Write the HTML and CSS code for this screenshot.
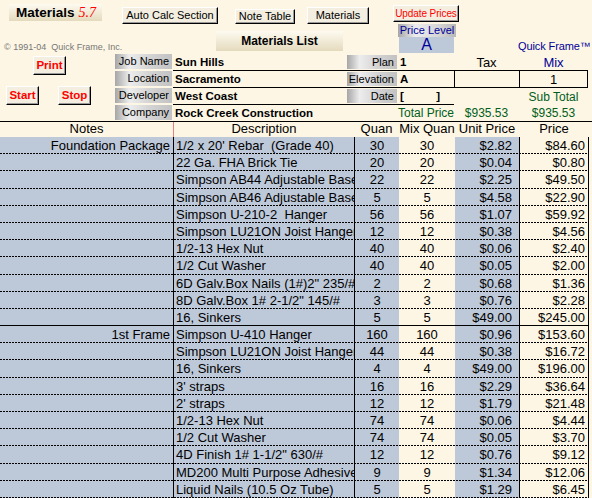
FILE: index.html
```html
<!DOCTYPE html>
<html lang="en">
<head>
    <meta charset="UTF-8">
    <title>Materials List</title>
    <link rel="stylesheet" href="styles.css">
</head>
<body>
<div class="screen">
    <div class="top">
        <div class="side">
            <div class="logo"><b>Materials</b><i>5.7</i></div>
            <div class="copy">© 1991-04  Quick Frame, Inc.</div>
            <div class="print-row"><button class="btn big">Print</button></div>
            <div class="run-row"><button class="btn big">Start</button><button class="btn big">Stop</button></div>
        </div>

        <div class="main">
            <div class="toolbar">
                <button class="btn auto">Auto Calc Section</button>
                <button class="btn note">Note Table</button>
                <button class="btn mats">Materials</button>
                <button class="btn update">Update Prices</button>
            </div>

            <div class="titlebar">
                <div class="list-title">Materials List</div>
                <div class="price-level">
                    <div class="pl-label">Price Level</div>
                    <div class="pl-value">A</div>
                </div>
                <div class="brand">Quick Frame™</div>
            </div>

            <div class="info">
                <div class="cell"><span class="lbl">Job Name</span></div>
                <div class="cell val line">Sun Hills</div>
                <div class="cell line"><span class="lbl small">Plan</span></div>
                <div class="cell val line">1</div>
                <div class="cell head line">Tax</div>
                <div class="cell head blue line">Mix</div>

                <div class="cell"><span class="lbl">Location</span></div>
                <div class="cell val line">Sacramento</div>
                <div class="cell line"><span class="lbl small">Elevation</span></div>
                <div class="cell val line">A</div>
                <div class="cell box line"></div>
                <div class="cell box mixbox line">1</div>

                <div class="cell"><span class="lbl">Developer</span></div>
                <div class="cell val line">West Coast</div>
                <div class="cell line"><span class="lbl small">Date</span></div>
                <div class="cell val line"><span class="date"><span>[</span><span>]</span></span></div>
                <div class="cell"></div>
                <div class="cell green mid">Sub Total</div>

                <div class="cell"><span class="lbl">Company</span></div>
                <div class="cell val">Rock Creek Construction</div>
                <div class="cell"></div>
                <div class="cell green mid">Total Price</div>
                <div class="cell green mid">$935.53</div>
                <div class="cell green mid">$935.53</div>
            </div>
        </div>
    </div>

    <div class="table">
        <div class="thead">
            <div class="c">Notes</div>
            <div class="c first">Description</div>
            <div class="c">Quan</div>
            <div class="c">Mix Quan</div>
            <div class="c">Unit Price</div>
            <div class="c">Price</div>
        </div>

        <!-- Foundation Package -->
        <div class="row"><div class="c notes">Foundation Package</div><div class="c desc">1/2 x 20' Rebar  (Grade 40)</div><div class="c qty">30</div><div class="c mix">30</div><div class="c unit">$2.82</div><div class="c price">$84.60</div></div>
        <div class="row"><div class="c notes"></div><div class="c desc">22 Ga. FHA Brick Tie</div><div class="c qty">20</div><div class="c mix">20</div><div class="c unit">$0.04</div><div class="c price">$0.80</div></div>
        <div class="row"><div class="c notes"></div><div class="c desc">Simpson AB44 Adjustable Base</div><div class="c qty">22</div><div class="c mix">22</div><div class="c unit">$2.25</div><div class="c price">$49.50</div></div>
        <div class="row"><div class="c notes"></div><div class="c desc">Simpson AB46 Adjustable Base</div><div class="c qty">5</div><div class="c mix">5</div><div class="c unit">$4.58</div><div class="c price">$22.90</div></div>
        <div class="row"><div class="c notes"></div><div class="c desc">Simpson U-210-2  Hanger</div><div class="c qty">56</div><div class="c mix">56</div><div class="c unit">$1.07</div><div class="c price">$59.92</div></div>
        <div class="row"><div class="c notes"></div><div class="c desc">Simpson LU21ON Joist Hanger</div><div class="c qty">12</div><div class="c mix">12</div><div class="c unit">$0.38</div><div class="c price">$4.56</div></div>
        <div class="row"><div class="c notes"></div><div class="c desc">1/2-13 Hex Nut</div><div class="c qty">40</div><div class="c mix">40</div><div class="c unit">$0.06</div><div class="c price">$2.40</div></div>
        <div class="row"><div class="c notes"></div><div class="c desc">1/2 Cut Washer</div><div class="c qty">40</div><div class="c mix">40</div><div class="c unit">$0.05</div><div class="c price">$2.00</div></div>
        <div class="row"><div class="c notes"></div><div class="c desc">6D Galv.Box Nails (1#)2" 235/#</div><div class="c qty">2</div><div class="c mix">2</div><div class="c unit">$0.68</div><div class="c price">$1.36</div></div>
        <div class="row"><div class="c notes"></div><div class="c desc">8D Galv.Box 1# 2-1/2" 145/#</div><div class="c qty">3</div><div class="c mix">3</div><div class="c unit">$0.76</div><div class="c price">$2.28</div></div>
        <div class="row end"><div class="c notes"></div><div class="c desc">16, Sinkers</div><div class="c qty">5</div><div class="c mix">5</div><div class="c unit">$49.00</div><div class="c price">$245.00</div></div>

        <!-- 1st Frame -->
        <div class="row"><div class="c notes">1st Frame</div><div class="c desc">Simpson U-410 Hanger</div><div class="c qty">160</div><div class="c mix">160</div><div class="c unit">$0.96</div><div class="c price">$153.60</div></div>
        <div class="row"><div class="c notes"></div><div class="c desc">Simpson LU21ON Joist Hanger</div><div class="c qty">44</div><div class="c mix">44</div><div class="c unit">$0.38</div><div class="c price">$16.72</div></div>
        <div class="row"><div class="c notes"></div><div class="c desc">16, Sinkers</div><div class="c qty">4</div><div class="c mix">4</div><div class="c unit">$49.00</div><div class="c price">$196.00</div></div>
        <div class="row"><div class="c notes"></div><div class="c desc">3' straps</div><div class="c qty">16</div><div class="c mix">16</div><div class="c unit">$2.29</div><div class="c price">$36.64</div></div>
        <div class="row"><div class="c notes"></div><div class="c desc">2' straps</div><div class="c qty">12</div><div class="c mix">12</div><div class="c unit">$1.79</div><div class="c price">$21.48</div></div>
        <div class="row"><div class="c notes"></div><div class="c desc">1/2-13 Hex Nut</div><div class="c qty">74</div><div class="c mix">74</div><div class="c unit">$0.06</div><div class="c price">$4.44</div></div>
        <div class="row"><div class="c notes"></div><div class="c desc">1/2 Cut Washer</div><div class="c qty">74</div><div class="c mix">74</div><div class="c unit">$0.05</div><div class="c price">$3.70</div></div>
        <div class="row"><div class="c notes"></div><div class="c desc">4D Finish 1# 1-1/2" 630/#</div><div class="c qty">12</div><div class="c mix">12</div><div class="c unit">$0.76</div><div class="c price">$9.12</div></div>
        <div class="row"><div class="c notes"></div><div class="c desc">MD200 Multi Purpose Adhesive</div><div class="c qty">9</div><div class="c mix">9</div><div class="c unit">$1.34</div><div class="c price">$12.06</div></div>
        <div class="row"><div class="c notes"></div><div class="c desc">Liquid Nails (10.5 Oz Tube)</div><div class="c qty">5</div><div class="c mix">5</div><div class="c unit">$1.29</div><div class="c price">$6.45</div></div>
    </div>
</div>
</body>
</html>
```

FILE: styles.css
```css
* {
    box-sizing: border-box;
}

body {
    margin: 0;
    background: #fdf6e4;
    font-family: "Liberation Sans", Arial, sans-serif;
    color: #000;
}

.screen {
    width: 592px;
    height: 498px;
    overflow: hidden;
}

/* top part */
.top {
    display: flex;
    height: 121px;
}

.side {
    width: 115px;
    display: flex;
    flex-direction: column;
    align-items: flex-start;
}

.logo {
    margin: 4px 0 0 9px;
    width: 93px;
    height: 17px;
    padding-left: 7px;
    display: flex;
    align-items: center;
    background: linear-gradient(to bottom, #fdfaf0, #e4dabd);
}

.logo b {
    font-size: 13.5px;
}

.logo i {
    margin-left: 4px;
    font-family: "Liberation Serif", serif;
    font-size: 14px;
    color: #f00;
}

.copy {
    margin: 21px 0 0 4px;
    font-size: 9px;
    line-height: 10px;
    color: #777;
    white-space: pre;
}

.print-row {
    margin: 3px 0 0 33px;
}

.run-row {
    margin: 11px 0 0 6px;
    display: flex;
    gap: 19px;
}

.btn {
    font-family: inherit;
    padding: 0;
    background: #f3eedf;
    border: 1px solid;
    border-color: #fff #000 #000 #fff;
    box-shadow: inset -1px -1px #9a9a9a;
    font-size: 11px;
    line-height: 1;
    color: #000;
    white-space: nowrap;
}

.btn.big {
    width: 33px;
    height: 19px;
    font-weight: bold;
    font-size: 11.5px;
    color: #f00;
}

.main {
    flex: 1;
    min-width: 0;
}

.toolbar {
    height: 24px;
    display: flex;
    align-items: flex-start;
}

.auto {
    margin: 7px 0 0 7px;
    width: 96px;
    height: 17px;
}

.note {
    margin: 9px 0 0 17px;
    width: 60px;
    height: 15px;
}

.mats {
    margin: 7px 0 0 12px;
    width: 62px;
    height: 17px;
}

.update {
    margin: 5px 0 0 24px;
    width: 66px;
    height: 17px;
    font-size: 10px;
    letter-spacing: -0.1px;
    color: #f00;
}

.titlebar {
    height: 30px;
    display: flex;
    align-items: flex-start;
}

.list-title {
    margin: 7px 0 0 101px;
    width: 127px;
    height: 20px;
    text-align: center;
    font-weight: bold;
    font-size: 12px;
    line-height: 20px;
    background: linear-gradient(to bottom, #fdfaf0, #e4dabd);
}

.price-level {
    margin-left: 55px;
    width: 58px;
}

.pl-label {
    height: 13px;
    font-size: 11px;
    line-height: 13px;
    text-align: center;
    white-space: nowrap;
    color: #000099;
    background: linear-gradient(to right, #a6a6a6, #ededed 30%, #d6d6d6 70%, #b8b8b8);
}

.pl-value {
    margin: 0 2px 0 1px;
    height: 16px;
    font-size: 16px;
    line-height: 16px;
    text-align: center;
    color: #000099;
    background: #bdc8d9;
}

.brand {
    margin: 16px 0 0 62px;
    font-size: 11px;
    line-height: 13px;
    letter-spacing: -0.1px;
    color: #000099;
    white-space: nowrap;
}

.info {
    display: grid;
    grid-template-columns: 58px 173px 52px 56px 65px 69px;
    grid-template-rows: 17px 17px 17px 16px;
}

.cell {
    display: flex;
    align-items: flex-end;
    white-space: nowrap;
}

.line {
    border-bottom: 1px solid #000;
}

.lbl {
    align-self: flex-start;
    width: 57px;
    height: 15px;
    padding-right: 3px;
    font-size: 11px;
    line-height: 15px;
    text-align: right;
    background: linear-gradient(to right, #a6a6a6, #ededed 25%, #d4d4d4 60%, #c2c2c2);
}

.lbl.small {
    margin: 1px 0 0 1px;
    width: 50px;
    height: 14px;
    line-height: 14px;
}

.val {
    padding: 0 0 2px 2px;
    font-weight: bold;
    font-size: 11.5px;
    line-height: 1;
}

.date {
    display: inline-flex;
    justify-content: space-between;
    width: 40px;
}

.head {
    justify-content: center;
    padding-bottom: 1px;
    font-size: 13px;
    line-height: 1;
}

.blue {
    color: #000099;
}

.box {
    border-left: 1px solid #000;
}

.mixbox {
    border-right: 1px solid #000;
    justify-content: center;
    padding-bottom: 1px;
    font-size: 13px;
    line-height: 1;
}

.green {
    color: #00601c;
    font-size: 12px;
    line-height: 1;
    padding-bottom: 2px;
}

.mid {
    justify-content: center;
}

/* table */
.table {
    --cols: linear-gradient(to right, #bdc8d9 0 399px, #fdf6e4 399px 455px, #bdc8d9 455px 519px, #fdf6e4 519px 589px, transparent 589px);
    --dash: repeating-linear-gradient(to right, #000 0 2px, transparent 2px 3px) left bottom / 589px 1px no-repeat;
    border-top: 1px solid #000;
    font-size: 13px;
}

.thead,
.row {
    display: grid;
    grid-template-columns: 173px 181px 45px 56px 64px 70px;
}

.thead {
    height: 15px;
    line-height: 14px;
    text-align: center;
}

.thead .first {
    border-left: 1px solid #e88080;
}

.row {
    height: 17.2px;
    line-height: 17px;
    background: var(--dash), var(--cols);
}

.row.end {
    background: linear-gradient(#000, #000) left bottom / 589px 1px no-repeat, var(--cols);
}

.c {
    white-space: pre;
    overflow: hidden;
}

.notes {
    text-align: right;
    padding-right: 3px;
}

.desc {
    padding-left: 2px;
    border-left: 1px solid #000;
}

.qty {
    text-align: center;
    border-left: 1px solid #000;
}

.mix {
    text-align: center;
}

.unit {
    text-align: right;
    padding-right: 7px;
}

.price {
    text-align: right;
    padding-right: 3px;
    border-left: 1px solid #000;
    border-right: 1px solid #000;
}
```
